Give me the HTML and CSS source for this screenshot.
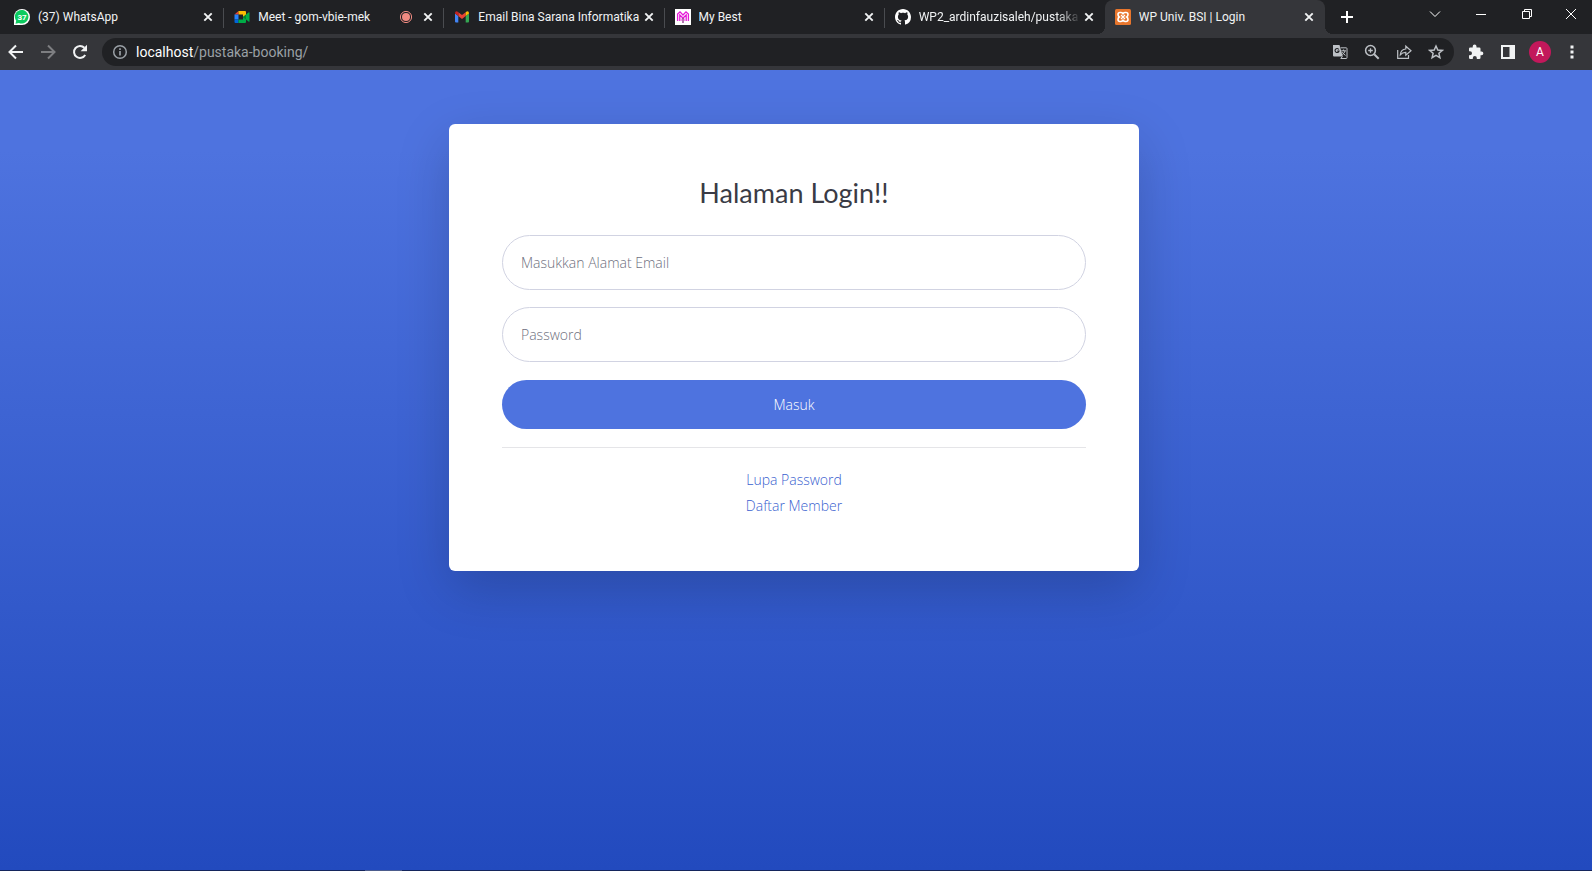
FILE: index.html
```html
<!DOCTYPE html>
<html lang="id">
<head>
<meta charset="utf-8">
<title>WP Univ. BSI | Login</title>
<meta name="viewport" content="width=device-width, initial-scale=1">
<link rel="stylesheet" href="styles.css">
</head>
<body>
<svg class="defs" aria-hidden="true">
  <symbol id="x" viewBox="0 0 16 16"><path d="M4.300 4.300l7.400 7.400M11.700 4.300l-7.400 7.400" stroke="currentColor" stroke-width="1.900" fill="none"/></symbol>
</svg>
<header class="chrome">
  <div class="strip">
    <nav class="tabs" aria-label="Tab">
      <div class="tab">
        <svg class="fav" viewBox="0 0 16 16"><path d="M0 16V8a8 8 0 1 1 8 8z" fill="#fff"/><path d="M1.500 14.800l.7-3A6.800 6.800 0 1 1 5 14z" fill="#0ccb5f"/><text x="8" y="11" class="badge-text">37</text></svg>
        <span class="tab-title">(37) WhatsApp</span>
        <button class="close" aria-label="Tutup tab"><svg viewBox="0 0 16 16"><use href="#x"/></svg></button>
      </div>
      <div class="tab">
        <svg class="fav" viewBox="0 0 16 16"><path d="M.5 5.500L4.500 2v3.500z" fill="#ea4335"/><path d="M4.500 2H11q1 0 1 1v4L9 8V5.500H4.500z" fill="#fbbc04"/><path d="M.5 5.500h4v5h-4z" fill="#2684fc"/><path d="M.5 10.500h4V14h-3q-1 0-1-1z" fill="#0066da"/><path d="M4.500 10.500H9V8l3 2v3q0 1-1 1H4.500z" fill="#00ac47"/><path d="M9 8l5.500-4.600q1-.6 1 .4v8.400q0 1-1 .4z" fill="#00ac47"/><path d="M9 8l3-2.500v5z" fill="#00832d"/></svg>
        <span class="tab-title">Meet - gom-vbie-mek</span>
        <svg class="rec" viewBox="0 0 14 14"><circle cx="7" cy="7" r="5.600" fill="none" stroke="#f28b82"/><circle cx="7" cy="7" r="4" fill="#f28b82"/></svg>
        <button class="close" aria-label="Tutup tab"><svg viewBox="0 0 16 16"><use href="#x"/></svg></button>
      </div>
      <div class="tab">
        <svg class="fav" viewBox="0 0 16 16"><path d="M1 4.500l3.300 2.400V13.500H2q-1 0-1-1z" fill="#4285f4"/><path d="M11.700 6.900L15 4.500v8q0 1-1 1h-2.300z" fill="#34a853"/><path d="M4.300 3.200L8 6l3.700-2.800v3.900L8 9.900 4.300 7.100z" fill="#ea4335"/><path d="M1 4.600V4q.3-2.200 2.300-1.500l1 .7v3.900z" fill="#c5221f"/><path d="M15 4.600V4q-.3-2.200-2.300-1.500l-1 .7v3.900z" fill="#fbbc04"/></svg>
        <span class="tab-title">Email Bina Sarana Informatika</span>
        <button class="close" aria-label="Tutup tab"><svg viewBox="0 0 16 16"><use href="#x"/></svg></button>
      </div>
      <div class="tab">
        <svg class="fav" viewBox="0 0 16 16"><path d="M0 0h16v16H0z" fill="#fff"/><path d="M2.600 12V5L5 2.800 8 6l3-3.200L13.400 5v7M4.800 12V6l3.200 3 3.200-3v6" stroke="#e619d8" stroke-width="1.300" fill="none"/><path d="M6.600 9.500V12M9.400 9.500V12" stroke="#f08ae8" fill="none"/><path d="M8 9v5" stroke="#8a2b86" stroke-width="1.300"/></svg>
        <span class="tab-title">My Best</span>
        <button class="close" aria-label="Tutup tab"><svg viewBox="0 0 16 16"><use href="#x"/></svg></button>
      </div>
      <div class="tab">
        <svg class="fav" viewBox="0 0 16 16"><path fill="#fff" d="M8 0C3.580 0 0 3.580 0 8c0 3.540 2.290 6.530 5.470 7.590.4.070.55-.17.55-.38 0-.19-.01-.82-.01-1.490-2.010.37-2.530-.49-2.690-.94-.09-.23-.48-.94-.82-1.130-.28-.15-.68-.52-.01-.53.63-.01 1.080.58 1.230.82.72 1.210 1.870.87 2.330.66.070-.52.28-.87.51-1.070-1.780-.2-3.640-.89-3.640-3.950 0-.87.31-1.590.82-2.150-.08-.2-.36-1.020.08-2.120 0 0 .67-.21 2.200.82.64-.18 1.320-.27 2-.27s1.360.09 2 .27c1.530-1.040 2.200-.82 2.200-.82.44 1.100.16 1.920.08 2.120.51.56.82 1.270.82 2.150 0 3.070-1.870 3.750-3.650 3.950.29.25.54.73.54 1.480 0 1.070-.01 1.930-.01 2.200 0 .21.15.46.55.38A8.010 8.010 0 0 0 16 8c0-4.420-3.580-8-8-8z"/></svg>
        <span class="tab-title fade">WP2_ardinfauzisaleh/pustaka</span>
        <button class="close" aria-label="Tutup tab"><svg viewBox="0 0 16 16"><use href="#x"/></svg></button>
      </div>
      <div class="tab active">
        <svg class="fav" viewBox="0 0 16 16"><rect width="16" height="16" rx="1.500" fill="#e8762d"/><path d="M8 5.200Q7.600 3.500 6 3.500H5Q3 3.500 3 5.500 3 7.200 4.300 8 3 8.800 3 10.500q0 2 2 2h1q1.600 0 2-1.700.4 1.700 2 1.700h1q2 0 2-2Q13 8.800 11.700 8 13 7.200 13 5.500q0-2-2-2h-1Q8.400 3.500 8 5.200z" fill="none" stroke="#fff" stroke-width="1.600"/><path d="M6 6l4 4M10 6l-4 4" stroke="#fff" stroke-width="1.200"/></svg>
        <span class="tab-title">WP Univ. BSI | Login</span>
        <button class="close" aria-label="Tutup tab"><svg viewBox="0 0 16 16"><use href="#x"/></svg></button>
      </div>
    </nav>
    <button class="new-tab" aria-label="Tab baru"><svg viewBox="0 0 14 14"><path d="M7 1v12M1 7h12" stroke="#fff" stroke-width="2"/></svg></button>
    <div class="window-buttons">
      <button aria-label="Cari tab"><svg viewBox="0 0 12 12"><path d="M1 3.500l5 5 5-5" class="thin"/></svg></button>
      <button aria-label="Minimalkan"><svg viewBox="0 0 12 12"><path d="M1 6.500h10" class="thin"/></svg></button>
      <button aria-label="Pulihkan"><svg viewBox="0 0 12 12"><path d="M1.500 3.500h7v7h-7zM3.500 3.500v-2h7v7h-2" class="thin"/></svg></button>
      <button aria-label="Tutup"><svg viewBox="0 0 12 12"><path d="M1 1l10 10M11 1L1 11" class="thin"/></svg></button>
    </div>
  </div>
  <div class="toolbar">
    <button class="tool" aria-label="Kembali"><svg viewBox="0 0 16 16"><path d="M15 8H2M8 1.500L1.500 8 8 14.500" class="line bold"/></svg></button>
    <button class="tool dim" aria-label="Maju"><svg viewBox="0 0 16 16"><path d="M1 8h13M8 1.500L14.500 8 8 14.500" class="line bold"/></svg></button>
    <button class="tool" aria-label="Muat ulang"><svg viewBox="0 0 16 16"><path d="M13.200 11A6 6 0 1 1 12.400 3.800" class="line bold"/><path d="M15 .8v6.400H8.600z" fill="currentColor"/></svg></button>
    <div class="omnibox">
      <svg class="info" viewBox="0 0 16 16"><circle cx="8" cy="8" r="6.300" class="line"/><path d="M8 7v4.500M8 4.200v1.800" stroke="currentColor" stroke-width="1.700"/></svg>
      <div class="url">localhost<span>/pustaka-booking/</span></div>
      <button class="tool" aria-label="Terjemahkan"><svg viewBox="0 0 16 16"><path d="M1 1h6.500l3.300 11.500H2q-1 0-1-1z" fill="currentColor"/><path d="M6.800 5.500A2 2 0 1 0 7 7H5.300" stroke="#202124" fill="none" stroke-width="1.200"/><path d="M8.600 3.800h5.600q.8 0 .8.800v9.100q0 .8-.8.800H8.800l1.600-2M9.300 6.800h4.700M11.600 5.500v1.300M13 7q-.6 2.200-2.600 3.700M10.200 8.200q1 1.700 3.300 3.200" stroke="currentColor" fill="none"/></svg></button>
      <button class="tool" aria-label="Perbesar"><svg viewBox="0 0 16 16"><circle cx="6.500" cy="6.500" r="4.900" class="line"/><path d="M10.200 10.200l4.500 4.500" stroke="currentColor" stroke-width="2"/><path d="M6.500 4.200v4.600M4.200 6.500h4.600" stroke="currentColor" stroke-width="1.300"/></svg></button>
      <button class="tool" aria-label="Bagikan"><svg viewBox="0 0 16 16"><path d="M1.700 6v8.300h10.800v-3.300" class="line thin-line"/><path d="M4.300 10.800Q4.800 5.500 9.800 5V2.200L15 6.800l-5.200 4.400V8.400Q6.500 8.300 4.300 10.800z" class="line thin-line"/></svg></button>
      <button class="tool" aria-label="Tandai"><svg viewBox="0 0 16 16"><path d="M8 2l1.800 4 4.500.4-3.400 2.900 1 4.400L8 11.400l-3.900 2.300 1-4.400L1.700 6.400 6.200 6z" class="line"/></svg></button>
    </div>
    <button class="tool" aria-label="Ekstensi"><svg viewBox="0 0 16 16"><path d="M13.500 7.500h-1V4.800q0-1.300-1.300-1.300H8.500v-1a1.900 1.900 0 0 0-3.800 0v1H2.300Q1 3.500 1 4.800v2.500h1a2 2 0 0 1 0 4H1v2.400Q1 15 2.300 15h2.500v-1a2 2 0 0 1 4 0v1h2.400q1.300 0 1.300-1.300v-2.500h1a1.850 1.850 0 0 0 0-3.700z" fill="currentColor"/></svg></button>
    <button class="tool" aria-label="Panel samping"><svg viewBox="0 0 16 16"><path d="M1 1h14v14H1zM3 3v10h6.500V3z" fill="currentColor" fill-rule="evenodd"/></svg></button>
    <button class="avatar" aria-label="Profil A">A</button>
    <button class="tool" aria-label="Menu"><svg viewBox="0 0 16 16"><path d="M6.500 1.500h3v3h-3zM6.500 6.500h3v3h-3zM6.500 11.500h3v3h-3z" fill="currentColor"/></svg></button>
  </div>
</header>
<main class="page">
  <section class="card">
    <h1>Halaman Login!!</h1>
    <form class="form">
      <input type="text" aria-label="Masukkan Alamat Email" placeholder="Masukkan Alamat Email">
      <input type="password" aria-label="Password" placeholder="Password">
      <button type="button" class="submit">Masuk</button>
    </form>
    <hr>
    <div class="links">
      <a href="#">Lupa Password</a>
      <a href="#">Daftar Member</a>
    </div>
  </section>
</main>
<footer class="edge"><span></span></footer>
</body>
</html>
```
FILE: styles.css
```css
* { box-sizing: border-box; }
body {
  margin: 0;
  min-height: 100vh;
  display: flex;
  flex-direction: column;
  font-family: Roboto, "Liberation Sans", sans-serif;
}
button { border: 0; padding: 0; background: none; color: inherit; font: inherit; }
svg { display: block; }
.defs { display: none; }

.chrome { color: #f1f3f4; background: #35363a; }
.strip { display: flex; height: 34px; background: #202124; }
.tabs { display: flex; flex: 0 1 1325px; min-width: 0; padding-left: 4px; }
.tab {
  position: relative;
  display: flex;
  flex: 1 1 0;
  align-items: center;
  min-width: 0;
  padding: 0 8px 0 10px;
  font-size: 12px;
}
.tab::after {
  content: "";
  position: absolute;
  right: 0;
  top: 8px;
  width: 1px;
  height: 20px;
  background: #4a4c50;
}
.tab:nth-child(5)::after { display: none; }
.tab.active { background: #35363a; border-radius: 8px 8px 0 0; }
.tab.active::before,
.tab.active::after {
  content: "";
  position: absolute;
  top: auto;
  bottom: 0;
  width: 8px;
  height: 8px;
}
.tab.active::before { left: -8px; background: radial-gradient(circle at 0 0, #202124 8px, #35363a 8px); }
.tab.active::after { right: -8px; background: radial-gradient(circle at 100% 0, #202124 8px, #35363a 8px); }
.fav { flex: none; width: 16px; height: 16px; margin-right: 8px; }
.badge-text { font-size: 8px; font-weight: 700; fill: #fff; text-anchor: middle; }
.tab-title { flex: 1; overflow: hidden; white-space: nowrap; line-height: 16px; }
.fade { mask-image: linear-gradient(to right, #000 calc(100% - 24px), transparent); }
.rec { width: 14px; height: 14px; margin-right: 7px; }
.close { flex: none; width: 16px; height: 16px; }
.new-tab { width: 44px; display: grid; place-items: center; }
.new-tab svg { width: 14px; height: 14px; }
.window-buttons { display: flex; height: 28px; margin-left: auto; }
.window-buttons button { width: 46px; display: grid; place-items: center; }
.window-buttons button:last-child { width: 42px; }
.window-buttons svg { width: 12px; height: 12px; }
.thin { fill: none; stroke: #fff; stroke-width: 1; }

.toolbar { display: flex; align-items: center; height: 36px; padding: 0 4px 0 0; }
.tool { flex: none; width: 32px; height: 28px; display: grid; place-items: center; }
.tool svg { width: 16px; height: 16px; }
.dim { color: #7d7e81; }
.line { fill: none; stroke: currentColor; stroke-width: 1.5; }
.thin-line { stroke-width: 1.2; }
.bold { stroke-width: 2; }
.omnibox {
  display: flex;
  flex: 1;
  align-items: center;
  min-width: 0;
  height: 28px;
  margin: 0 6px;
  padding: 0 2px 0 10px;
  border-radius: 14px;
  background: #202124;
  color: #bdc1c6;
}
.info { width: 16px; height: 16px; color: #9aa0a6; }
.url { flex: 1; margin-left: 8px; font-size: 14px; color: #fff; }
.url span { color: #9aa0a6; }
.avatar {
  width: 22px;
  height: 22px;
  margin: 0 5px;
  border-radius: 50%;
  background: #c2185b;
  color: #fff;
  font-size: 12px;
}

.page {
  flex: 1;
  display: flex;
  align-items: flex-start;
  justify-content: center;
  padding: 54px 4px 54px 0;
  background: linear-gradient(180deg, #4e73df 10%, #224abe 100%);
  font-family: "Open Sans", "Noto Sans", sans-serif;
  font-size: 14px;
  font-weight: 300;
}
.card {
  width: 100%;
  max-width: 690px;
  padding: 53px 53px 52px;
  border-radius: 6px;
  background: #fff;
  box-shadow: 0 18px 53px rgba(0, 0, 0, 0.18);
}
h1 {
  margin: 0 0 27px;
  font-family: Lato, sans-serif;
  font-size: 27px;
  line-height: 31px;
  font-weight: 400;
  text-align: center;
  color: #3a3b45;
}
.form { display: flex; flex-direction: column; gap: 17px; }
.form input {
  width: 100%;
  height: 55px;
  padding: 0 18px;
  border: 1px solid #d1d3e2;
  border-radius: 28px;
  font: inherit;
  color: #6e707e;
  outline: 0;
}
.form input::placeholder { color: #6e707e; opacity: 1; }
.submit { height: 49px; margin-top: 1px; border-radius: 25px; background: #4e73df; color: #fff; }
hr { margin: 18px 0 19px; border: 0; border-top: 1px solid #e5e5e8; }
.links { display: flex; flex-direction: column; align-items: center; }
.links a { line-height: 26px; color: #3a5fcf; text-decoration: none; }
.edge { height: 1px; background: #14255c; }
.edge span { display: block; width: 37px; height: 1px; margin-left: 365px; background: #4c5c8c; }
```
